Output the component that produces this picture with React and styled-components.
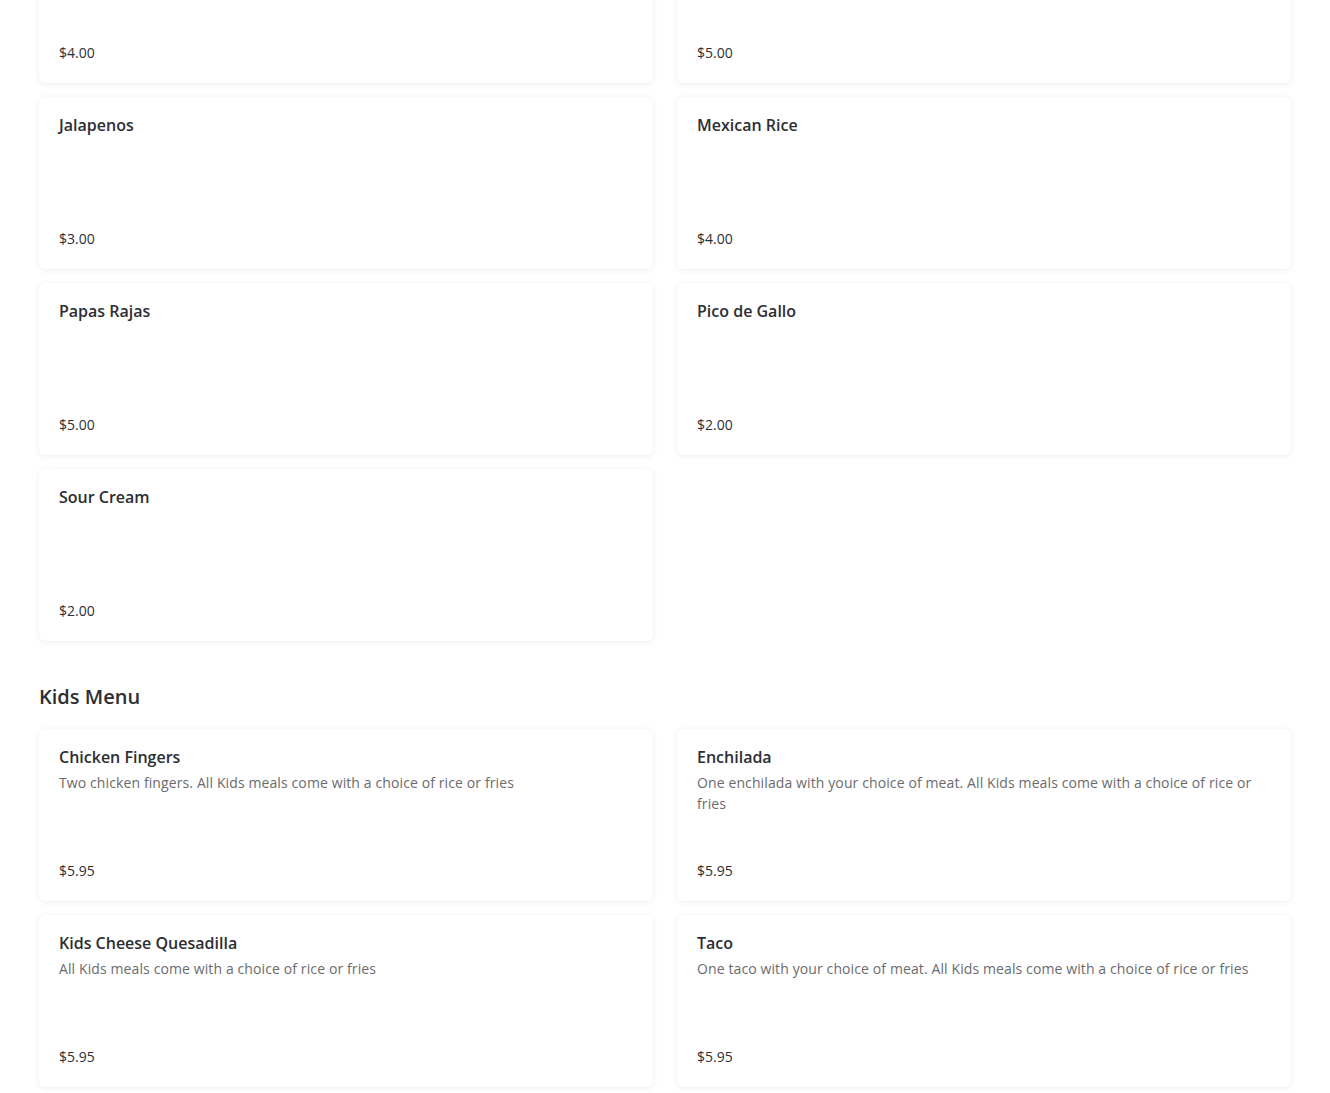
import React from 'react';
import styled, { createGlobalStyle } from 'styled-components';

const GlobalStyle = createGlobalStyle`
  body {
    margin: 0;
    background: #ffffff;
    font-family: 'Open Sans', 'Noto Sans', sans-serif;
    overflow: hidden;
  }
`;

const Page = styled.div`
  width: 1252px;
  padding: 0 39px 24px;
  margin-top: -89px;
`;

const Grid = styled.div`
  display: grid;
  grid-template-columns: 1fr 1fr;
  column-gap: 24px;
  row-gap: 14px;
`;

const Card = styled.div`
  height: 172px;
  box-sizing: border-box;
  padding: 18px 20px 20px;
  background: #ffffff;
  border-radius: 6px;
  box-shadow: 0 1px 6px rgba(0, 0, 0, 0.07), 0 0 1px rgba(0, 0, 0, 0.04);
  display: flex;
  flex-direction: column;
`;

const Title = styled.div`
  font-size: 16px;
  line-height: 20px;
  font-weight: 600;
  color: #2d2e33;
`;

const Desc = styled.div`
  margin-top: 5px;
  font-size: 14px;
  line-height: 21px;
  letter-spacing: 0.11px;
  color: #6b6b6e;
`;

const Price = styled.div`
  margin-top: auto;
  font-size: 14px;
  line-height: 20px;
  color: #2d2e33;
`;

const Heading = styled.h2`
  margin: 42px 0 18px;
  font-size: 20px;
  line-height: 28px;
  font-weight: 600;
  color: #2d2e33;
`;

const sides = [
  { name: '', price: '$4.00' },
  { name: '', price: '$5.00' },
  { name: 'Jalapenos', price: '$3.00' },
  { name: 'Mexican Rice', price: '$4.00' },
  { name: 'Papas Rajas', price: '$5.00' },
  { name: 'Pico de Gallo', price: '$2.00' },
  { name: 'Sour Cream', price: '$2.00' },
];

const kids = [
  { name: 'Chicken Fingers', desc: 'Two chicken fingers. All Kids meals come with a choice of rice or fries', price: '$5.95' },
  { name: 'Enchilada', desc: 'One enchilada with your choice of meat. All Kids meals come with a choice of rice or fries', price: '$5.95' },
  { name: 'Kids Cheese Quesadilla', desc: 'All Kids meals come with a choice of rice or fries', price: '$5.95' },
  { name: 'Taco', desc: 'One taco with your choice of meat. All Kids meals come with a choice of rice or fries', price: '$5.95' },
];

const Item = ({ name, desc, price }) => (
  <Card>
    {name && <Title>{name}</Title>}
    {desc && <Desc>{desc}</Desc>}
    <Price>{price}</Price>
  </Card>
);

const App = () => (
  <>
    <GlobalStyle />
    <Page>
      <Grid>
        {sides.map((s, i) => <Item key={i} {...s} />)}
      </Grid>
      <Heading>Kids Menu</Heading>
      <Grid>
        {kids.map((k) => <Item key={k.name} {...k} />)}
      </Grid>
    </Page>
  </>
);

export default App;
